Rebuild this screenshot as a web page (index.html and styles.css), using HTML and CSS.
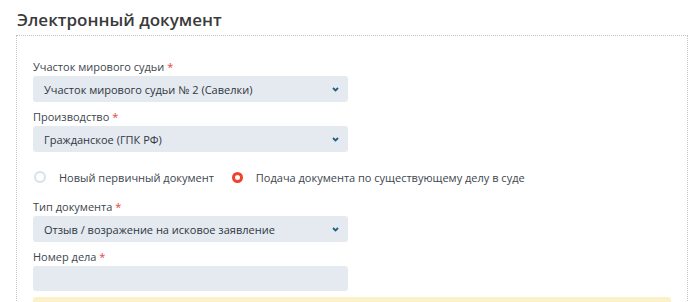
FILE: index.html
```html
<!DOCTYPE html>
<html lang="ru">
<head>
    <meta charset="UTF-8">
    <meta name="viewport" content="width=device-width, initial-scale=1.0">
    <title>Электронный документ</title>
    <link rel="stylesheet" href="styles.css">
</head>
<body>
    <h2 class="page-title">Электронный документ</h2>
    <form class="doc-card">
        <div class="field">
            <label>Участок мирового судьи <span class="req">*</span></label>
            <div class="select">
                <span>Участок мирового судьи № 2 (Савелки)</span>
                <svg class="chevron" width="7" height="5" viewBox="0 0 7 5"><path d="M1 1 L3.5 3.5 L6 1" fill="none" stroke="#1f5f80" stroke-width="1.8"/></svg>
            </div>
        </div>
        <div class="field">
            <label>Производство <span class="req">*</span></label>
            <div class="select">
                <span>Гражданское (ГПК РФ)</span>
                <svg class="chevron" width="7" height="5" viewBox="0 0 7 5"><path d="M1 1 L3.5 3.5 L6 1" fill="none" stroke="#1f5f80" stroke-width="1.8"/></svg>
            </div>
        </div>
        <div class="radios">
            <div class="radio">
                <span class="dot"></span>
                <span>Новый первичный документ</span>
            </div>
            <div class="radio">
                <span class="dot checked"></span>
                <span>Подача документа по существующему делу в суде</span>
            </div>
        </div>
        <div class="field">
            <label>Тип документа <span class="req">*</span></label>
            <div class="select">
                <span>Отзыв / возражение на исковое заявление</span>
                <svg class="chevron" width="7" height="5" viewBox="0 0 7 5"><path d="M1 1 L3.5 3.5 L6 1" fill="none" stroke="#1f5f80" stroke-width="1.8"/></svg>
            </div>
        </div>
        <div class="field">
            <label>Номер дела <span class="req">*</span></label>
            <div class="input"></div>
        </div>
        <div class="notice"></div>
    </form>
</body>
</html>
```

FILE: styles.css
```css
body {
    font-family: 'Open Sans', sans-serif;
    margin: 0;
    padding: 0 12px 0 16px;
    color: #333c44;
    background: #fff;
    overflow: hidden;
}
.page-title {
    font-size: 17px;
    font-weight: 600;
    color: #3a3a3a;
    margin: 0;
    padding: 6px 0 0 1px;
    line-height: 28px;
    height: 29px;
}
.doc-card {
    border: 1px dotted #c4c4c4;
    border-bottom: none;
    padding: 22px 16px 0 16px;
    height: 245px;
}
.field {
    width: 315px;
    margin-bottom: 6px;
}
.field label {
    display: block;
    font-size: 11px;
    line-height: 18px;
    color: #3d464e;
}
.req {
    color: #e5453a;
}
.select {
    display: flex;
    justify-content: space-between;
    align-items: center;
    height: 26px;
    padding: 0 9px 0 11px;
    background: #e5e9f0;
    border-radius: 3px;
    font-size: 11px;
    color: #2e3840;
}
.input {
    height: 25px;
    background: #e5e9f0;
    border-radius: 3px;
}
.radios {
    display: flex;
    align-items: center;
    gap: 18px;
    height: 22px;
    margin: 14px 0 10px 1px;
    font-size: 11px;
    color: #3d464e;
}
.radio {
    display: flex;
    align-items: center;
    gap: 13px;
}
.dot {
    width: 8px;
    height: 8px;
    border: 2px solid #d9e0e7;
    border-radius: 50%;
}
.dot.checked {
    width: 5px;
    height: 5px;
    border: 3.5px solid #f2412d;
}
.notice {
    height: 20px;
    background: #fcf1c9;
    border-radius: 3px;
}
```
